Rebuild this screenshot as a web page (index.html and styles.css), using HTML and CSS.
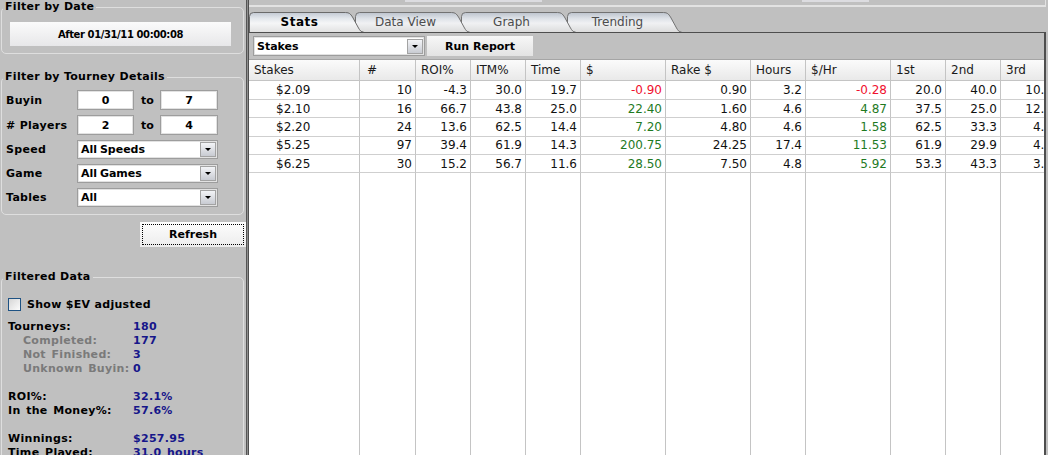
FILE: index.html
```html
<!DOCTYPE html>
<html>
<head>
<meta charset="utf-8">
<link rel="stylesheet" href="styles.css">
</head>
<body>
<div class="left">
  <fieldset class="grp g-date">
    <legend>Filter by Date</legend>
    <div class="datebtn">After 01/31/11 00:00:08</div>
  </fieldset>

  <fieldset class="grp g-tourney">
    <legend>Filter by Tourney Details</legend>
    <div class="frow first"><span class="lbl">Buyin</span><span class="inp">0</span><span class="to">to</span><span class="inp">7</span></div>
    <div class="frow"><span class="lbl">#&nbsp;Players</span><span class="inp">2</span><span class="to">to</span><span class="inp">4</span></div>
    <div class="frow srow"><span class="lbl">Speed</span><div class="sel"><span class="txt">All Speeds</span><i class="arr"></i></div></div>
    <div class="frow srow"><span class="lbl">Game</span><div class="sel"><span class="txt">All Games</span><i class="arr"></i></div></div>
    <div class="frow srow last"><span class="lbl">Tables</span><div class="sel"><span class="txt">All</span><i class="arr"></i></div></div>
  </fieldset>

  <button class="refresh">Refresh</button>

  <fieldset class="grp g-data">
    <legend>Filtered Data</legend>
    <div class="chk"><span class="box"></span><span>Show $EV adjusted</span></div>
    <div class="stats">
      <div class="sg">
        <span>Tourneys:</span><span class="v">180</span>
        <span class="sub">Completed:</span><span class="v">177</span>
        <span class="sub">Not Finished:</span><span class="v">3</span>
        <span class="sub">Unknown Buyin:</span><span class="v">0</span>
      </div>
      <div class="sg">
        <span>ROI%:</span><span class="v">32.1%</span>
        <span>In the Money%:</span><span class="v">57.6%</span>
      </div>
      <div class="sg">
        <span>Winnings:</span><span class="v">$257.95</span>
        <span>Time Played:</span><span class="v">31.0 hours</span>
      </div>
    </div>
  </fieldset>
</div>

<div class="split"></div>

<div class="right">
  <div class="topbar"><span class="seg s1"></span><span class="seg s2"></span></div>

  <div class="tabs">
    <svg class="tabsvg" width="797" height="21" viewBox="0 0 797 21">
      <defs>
        <linearGradient id="tg" x1="0" y1="0" x2="0" y2="1">
          <stop offset="0" stop-color="#bcc3cd"/>
          <stop offset="0.3" stop-color="#dde1e7"/>
          <stop offset="0.55" stop-color="#f0f1f3"/>
          <stop offset="1" stop-color="#dcdcdc"/>
        </linearGradient>
        <linearGradient id="ta" x1="0" y1="0" x2="0" y2="1">
          <stop offset="0" stop-color="#c2c9d3"/>
          <stop offset="0.3" stop-color="#e3e7ec"/>
          <stop offset="0.55" stop-color="#f5f6f7"/>
          <stop offset="1" stop-color="#e2e2e2"/>
        </linearGradient>
      </defs>
      <path fill="url(#tg)" stroke="#727272" d="M318.5,21 V5.5 Q318.5,1.5 322.5,1.5 H414.5 C418.5,1.5 419.5,3 421.5,6 L427.5,17 C429,19.5 430,21 432.5,21"/>
      <path fill="url(#tg)" stroke="#727272" d="M212.5,21 V5.5 Q212.5,1.5 216.5,1.5 H308.5 C312.5,1.5 313.5,3 315.5,6 L321.5,17 C323,19.5 324,21 326.5,21"/>
      <path fill="url(#tg)" stroke="#727272" d="M106.5,21 V5.5 Q106.5,1.5 110.5,1.5 H202.5 C206.5,1.5 207.5,3 209.5,6 L215.5,17 C217,19.5 218,21 220.5,21"/>
      <path fill="url(#ta)" stroke="#6a6a6a" d="M0.5,21 V5.5 Q0.5,1.5 4.5,1.5 H96.5 C100.5,1.5 101.5,3 103.5,6 L109.5,17 C111,19.5 112,21 114.5,21"/>
    </svg>
    <div class="tablabels">
      <span class="tab active">Stats</span>
      <span class="tab">Data View</span>
      <span class="tab">Graph</span>
      <span class="tab">Trending</span>
    </div>
  </div>

  <div class="panel">
    <div class="toolbar">
      <div class="sel wide"><span class="txt">Stakes</span><i class="arr"></i></div>
      <button class="runbtn">Run Report</button>
    </div>
    <div class="tablewrap">
      <table class="grid">
        <colgroup>
          <col class="w111"><col class="w56"><col class="w55"><col class="w55"><col class="w55"><col class="w85"><col class="w85"><col class="w55"><col class="w85"><col class="w55"><col class="w55"><col class="w55">
        </colgroup>
        <thead>
          <tr><th>Stakes</th><th class="hash">#</th><th>ROI%</th><th>ITM%</th><th>Time</th><th>$</th><th>Rake $</th><th>Hours</th><th>$/Hr</th><th>1st</th><th>2nd</th><th>3rd</th></tr>
        </thead>
        <tbody>
          <tr class="r1"><td class="stk">$2.09</td><td>10</td><td>-4.3</td><td>30.0</td><td>19.7</td><td class="neg">-0.90</td><td>0.90</td><td>3.2</td><td class="neg">-0.28</td><td>20.0</td><td>40.0</td><td>10.0</td></tr>
          <tr><td class="stk">$2.10</td><td>16</td><td>66.7</td><td>43.8</td><td>25.0</td><td class="pos">22.40</td><td>1.60</td><td>4.6</td><td class="pos">4.87</td><td>37.5</td><td>25.0</td><td>12.5</td></tr>
          <tr><td class="stk">$2.20</td><td>24</td><td>13.6</td><td>62.5</td><td>14.4</td><td class="pos">7.20</td><td>4.80</td><td>4.6</td><td class="pos">1.58</td><td>62.5</td><td>33.3</td><td>4.2</td></tr>
          <tr><td class="stk">$5.25</td><td>97</td><td>39.4</td><td>61.9</td><td>14.3</td><td class="pos">200.75</td><td>24.25</td><td>17.4</td><td class="pos">11.53</td><td>61.9</td><td>29.9</td><td>4.1</td></tr>
          <tr><td class="stk">$6.25</td><td>30</td><td>15.2</td><td>56.7</td><td>11.6</td><td class="pos">28.50</td><td>7.50</td><td>4.8</td><td class="pos">5.92</td><td>53.3</td><td>43.3</td><td>3.3</td></tr>
          <tr class="fill"><td></td><td></td><td></td><td></td><td></td><td></td><td></td><td></td><td></td><td></td><td></td><td></td></tr>
        </tbody>
      </table>
    </div>
  </div>
</div>
</body>
</html>
```

FILE: styles.css
```css
* { box-sizing: border-box; }

html, body {
  margin: 0;
  padding: 0;
  width: 1048px;
  height: 455px;
  overflow: hidden;
}

body {
  background: #c0c0c0;
  font-family: "DejaVu Sans", Verdana, sans-serif;
  display: flex;
  align-items: flex-start;
}

/* ---------- left filter panel ---------- */
.left {
  width: 246px;
  flex: none;
  padding-left: 1px;
  font-size: 11px;
  font-weight: bold;
  color: #000;
}

.grp {
  margin: 0;
  padding: 0;
  width: 243px;
  min-width: 0;
  border: 1px solid #dedede;
  border-radius: 5px;
}

.grp legend {
  margin-left: 1px;
  padding: 0 2px;
  height: 14px;
  line-height: 14px;
  letter-spacing: 0.3px;
}

.datebtn {
  margin: 8px 0 7px 8px;
  width: 221px;
  height: 24px;
  background: linear-gradient(#fbfbfb, #e7e7e9);
  display: flex;
  align-items: center;
  justify-content: center;
  font-size: 10px;
  letter-spacing: -0.4px;
}

.g-tourney { margin-top: 16px; }

.frow {
  display: flex;
  align-items: center;
  height: 20px;
  margin-top: 5px;
}
.frow.first { margin-top: 6px; }
.frow.srow { height: 19px; }
.frow.last { margin-bottom: 7px; }

.lbl {
  width: 75px;
  padding-left: 4px;
  letter-spacing: 0.3px;
}

.inp {
  width: 57px;
  height: 20px;
  background: #fff;
  border: 1px solid #9d9d9d;
  box-shadow: inset 0 0 0 1px #e2e2e2;
  display: flex;
  align-items: center;
  justify-content: center;
}
.inp:last-child { width: 58px; }

.to {
  width: 26px;
  padding-left: 7px;
}

.sel {
  width: 141px;
  height: 19px;
  display: flex;
  align-items: center;
  background: #fff;
  border: 1px solid #9d9d9d;
  box-shadow: inset 0 0 0 1px #e2e2e2;
  padding-left: 3px;
  word-spacing: -1px;
}
.sel .txt { flex: 1; }

.arr {
  width: 16px;
  height: 15px;
  margin-right: 1px;
  border: 1px solid #a3a3a3;
  background: linear-gradient(#f3f4f7, #c8cbd2);
  display: flex;
  align-items: center;
  justify-content: center;
}
.arr::before {
  content: "";
  border-left: 3px solid transparent;
  border-right: 3px solid transparent;
  border-top: 3px solid #000;
}

.refresh {
  display: block;
  margin: 7px 0 0 139px;
  width: 106px;
  height: 25px;
  border: none;
  background: linear-gradient(#fdfdfd, #ececec);
  outline: 1px dotted #000;
  outline-offset: -3px;
  font: bold 11px "DejaVu Sans", Verdana, sans-serif;
  color: #000;
  padding: 0;
}

.g-data { margin-top: 23px; }

.chk {
  display: flex;
  align-items: center;
  height: 14px;
  margin: 13px 0 0 6px;
  letter-spacing: 0.3px;
}
.chk .box {
  width: 13px;
  height: 13px;
  margin-right: 6px;
  border: 1px solid #1e5283;
  background: linear-gradient(135deg, #d6d6d6, #fcfcfc);
}

.stats {
  margin: 9px 0 0 6px;
  letter-spacing: 0.3px;
  word-spacing: 1.5px;
}
.sg {
  display: grid;
  grid-template-columns: 125px auto;
  line-height: 14px;
}
.sg + .sg { margin-top: 14px; }
.sg .sub { padding-left: 15px; color: #7a7a7a; }
.sg .v { color: #16168a; }

/* ---------- splitter ---------- */
.split {
  width: 3px;
  height: 455px;
  flex: none;
  background: #8e8e8e;
  border-left: 1px solid #555;
  border-right: 1px solid #4e4e4e;
}

/* ---------- right panel ---------- */
.right {
  width: 799px;
  height: 455px;
  flex: none;
  padding-right: 2px;
  display: flex;
  flex-direction: column;
}

.topbar {
  height: 7px;
  flex: none;
  border-bottom: 2px solid #e2e2e2;
  border-right: 1px solid #e2e2e2;
  margin-bottom: 4px;
  display: flex;
  align-items: flex-start;
}
.seg { height: 2px; background: #dcdce0; }
.s1 { margin-left: 156px; width: 137px; }
.s2 { margin-left: 260px; width: 67px; }

.tabs {
  height: 21px;
  flex: none;
  display: grid;
}
.tabs > * { grid-area: 1 / 1; }
.tabsvg { display: block; }

.tablabels {
  display: flex;
  align-items: center;
  font-size: 12px;
  padding-top: 1px;
}
.tab {
  width: 106px;
  text-align: center;
  padding-right: 5px;
  color: #4c4c4c;
}
.tab.active {
  font-weight: bold;
  color: #000;
  letter-spacing: 0.5px;
}

.panel {
  flex: 1;
  min-height: 0;
  display: flex;
  flex-direction: column;
  border-top: 1px solid #4e4e4e;
  border-right: 2px solid #4e4e4e;
}

.toolbar {
  height: 26px;
  flex: none;
  display: flex;
  align-items: flex-start;
  padding: 3px 0 0 4px;
  font-size: 11px;
  font-weight: bold;
}
.sel.wide {
  width: 172px;
  height: 20px;
}
.runbtn {
  margin-left: 2px;
  width: 106px;
  height: 20px;
  border: none;
  padding: 0;
  background: linear-gradient(#f7f7f7, #e3e3e3);
  font: bold 11px "DejaVu Sans", Verdana, sans-serif;
  color: #000;
}

.tablewrap {
  flex: 1;
  min-height: 0;
  overflow: hidden;
  background: #fff;
  border-top: 1px solid #a5a5a5;
}

.grid {
  width: 807px;
  table-layout: fixed;
  border-collapse: separate;
  border-spacing: 0;
  font-size: 12px;
  color: #111;
}
.w111 { width: 111px; }
.w56 { width: 56px; }
.w55 { width: 55px; }
.w85 { width: 85px; }

.grid th, .grid td {
  padding: 0;
  white-space: nowrap;
  overflow: hidden;
  border-right: 1px solid #c4c4c4;
}
.grid th {
  height: 21px;
  padding-left: 5px;
  text-align: left;
  font-weight: normal;
  color: #1a1a1a;
  background: linear-gradient(#fbfbfb, #e9e9e9);
  border-bottom: 1px solid #c4c4c4;
}
.grid th.hash { padding-left: 7px; }

.grid td {
  height: 18.33px;
  text-align: right;
  padding-right: 3px;
  border-bottom: 1px solid #cfcfcf;
}
.grid tr.r1 td { height: 19px; }
.grid td.stk { text-align: left; padding-left: 27px; padding-right: 0; }
.grid td.neg { color: #f0102e; }
.grid td.pos { color: #1f7a1f; }
.grid tr.fill td { height: 300px; border-bottom: none; }
```
